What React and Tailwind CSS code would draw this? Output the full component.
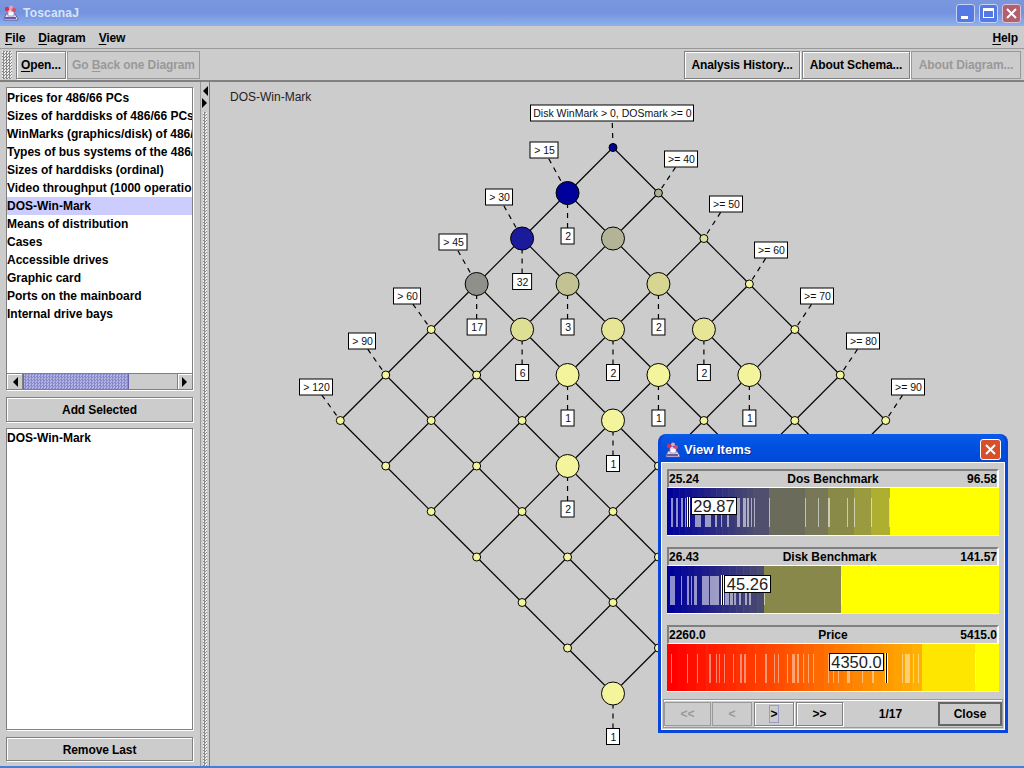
const sans = { fontFamily: '"Liberation Sans", Arial, sans-serif' };

const diagrams = [
  'Prices for 486/66 PCs',
  'Sizes of harddisks of 486/66 PCs',
  'WinMarks (graphics/disk) of 486/66 PCs',
  'Types of bus systems of the 486/66 PCs',
  'Sizes of harddisks (ordinal)',
  'Video throughput (1000 operations/s)',
  'DOS-Win-Mark',
  'Means of distribution',
  'Cases',
  'Accessible drives',
  'Graphic card',
  'Ports on the mainboard',
  'Internal drive bays',
];

// node key is "left steps,right steps" in the lattice
const bigNodes = {
  '1,0': '#00009a', '2,0': '#1a1a9a', '1,1': '#b3b398', '3,0': '#90908a',
  '2,1': '#c2c292', '1,2': '#d6d692', '3,1': '#dede94', '2,2': '#e6e696',
  '1,3': '#e6e696', '3,2': '#f4f49c', '2,3': '#f4f49c', '1,4': '#f4f49c',
  '3,3': '#f4f49c', '4,3': '#f4f49c', '6,6': '#f4f49c',
};
const smallColors = { '0,0': '#00009a', '0,1': '#b0b098', '0,2': '#e0e09c' };

const nodeX = (i, j) => 613 + (j - i) * 45.45;
const nodeY = (i, j) => 147.5 + (i + j) * 45.5;

const topLabels = [
  { t: 'Disk WinMark > 0, DOSmark >= 0', x: 612, y: 113, w: 164, n: [0, 0] },
  { t: '> 15', x: 544, y: 150, w: 29, n: [1, 0] },
  { t: '>= 40', x: 681, y: 159, w: 34, n: [0, 1] },
  { t: '> 30', x: 499, y: 197, w: 28, n: [2, 0] },
  { t: '>= 50', x: 726, y: 204, w: 34, n: [0, 2] },
  { t: '> 45', x: 453, y: 242, w: 29, n: [3, 0] },
  { t: '>= 60', x: 771, y: 250, w: 34, n: [0, 3] },
  { t: '> 60', x: 407, y: 296, w: 28, n: [4, 0] },
  { t: '>= 70', x: 817, y: 296, w: 34, n: [0, 4] },
  { t: '> 90', x: 362, y: 341, w: 28, n: [5, 0] },
  { t: '>= 80', x: 863, y: 341, w: 34, n: [0, 5] },
  { t: '> 120', x: 316, y: 387, w: 34, n: [6, 0] },
  { t: '>= 90', x: 908, y: 387, w: 34, n: [0, 6] },
];

const counts = [
  ['2', 1, 0], ['32', 2, 0], ['17', 3, 0], ['3', 2, 1], ['2', 1, 2], ['6', 3, 1], ['2', 2, 2],
  ['2', 1, 3], ['1', 3, 2], ['1', 2, 3], ['1', 1, 4], ['1', 3, 3], ['2', 4, 3], ['1', 6, 6],
];

const steps = [0, 1, 2, 3, 4, 5, 6];

function Tag({ t, x, y, w }) {
  return (
    <g>
      <rect x={x - w / 2 + 0.5} y={y - 8} width={w - 1} height={16} fill="#fff" stroke="#000" />
      <text x={x + 0.5} y={y + 4} textAnchor="middle" fontSize="10.5" fill="#111">{t}</text>
    </g>
  );
}

function Lattice() {
  return (
    <svg width="814" height="684" viewBox="210 82 814 684" className="block" style={sans}>
      {steps.map((i) =>
        steps.map((j) => (
          <g key={`${i}-${j}`} stroke="#000" strokeWidth="1.1">
            {i < 6 && <line x1={nodeX(i, j)} y1={nodeY(i, j)} x2={nodeX(i + 1, j)} y2={nodeY(i + 1, j)} />}
            {j < 6 && <line x1={nodeX(i, j)} y1={nodeY(i, j)} x2={nodeX(i, j + 1)} y2={nodeY(i, j + 1)} />}
          </g>
        ))
      )}
      {topLabels.map((l) => (
        <line key={l.t} x1={l.x} y1={l.y} x2={nodeX(...l.n)} y2={nodeY(...l.n)} stroke="#000" strokeWidth="1.2" strokeDasharray="5 5" />
      ))}
      {counts.map(([c, i, j]) => (
        <line key={`${i}${j}`} x1={nodeX(i, j)} y1={nodeY(i, j)} x2={nodeX(i, j)} y2={nodeY(i, j) + 42} stroke="#000" strokeWidth="1.2" strokeDasharray="5 5" />
      ))}
      {steps.map((i) =>
        steps.map((j) => {
          const big = bigNodes[`${i},${j}`];
          return (
            <circle
              key={`${i}-${j}`}
              cx={nodeX(i, j)}
              cy={nodeY(i, j)}
              r={big ? 11.5 : 4}
              fill={big || smallColors[`${i},${j}`] || '#f4f49c'}
              stroke="#000"
            />
          );
        })
      )}
      {topLabels.map((l) => <Tag key={l.t} {...l} />)}
      {counts.map(([c, i, j]) => (
        <Tag key={`${i}${j}`} t={c} x={nodeX(i, j)} y={nodeY(i, j) + 43} w={c.length > 1 ? 20 : 14} />
      ))}
    </svg>
  );
}

function mix(a, b, t) {
  const c = a.map((v, k) => Math.round(v + (b[k] - v) * t));
  return `rgb(${c[0]},${c[1]},${c[2]})`;
}

// stripes are given as [start, width] in px from the bar's left edge
function Bar({ segments, stripes, marker, box, value, stripeColor }) {
  return (
    <svg width="332" height="47" className="block" style={sans}>
      {segments.map(([x, w, c]) => <rect key={x} x={x} y="0" width={w} height="47" fill={c} />)}
      {stripes.map(([x, w]) => (
        <rect key={x} x={x} y="10" width={w} height="29" fill={stripeColor} />
      ))}
      <rect x={marker - 1} y="9" width="3" height="30" fill="#fff" />
      <rect x={marker} y="9" width="1" height="30" fill="#000" />
      <rect x={box[0] + 0.5} y={box[1] + 0.5} width={box[2]} height="17" fill="#fff" stroke="#000" />
      <text x={box[0] + box[2] / 2 + 0.5} y={box[1] + 15} textAnchor="middle" fontSize="16.5" fill="#222">{value}</text>
    </svg>
  );
}

const ramp = (from, to, start, width, n) =>
  Array.from({ length: n }, (_, k) => [
    start + (k * width) / n,
    width / n + 0.5,
    mix(from, to, k / (n - 1)),
  ]);

const bars = [
  {
    lo: '25.24', name: 'Dos Benchmark', hi: '96.58',
    segments: [
      ...ramp([0, 0, 154], [74, 74, 112], 0, 86, 14),
      [86, 16, '#50506e'], [102, 36, '#6b6b5c'], [138, 23, '#787858'], [161, 26, '#8a8a48'],
      [187, 17, '#9a9a3e'], [204, 19, '#aeae30'], [223, 109, '#ffff00'],
    ],
    stripes: [[4, 2], [9, 2], [14, 2], [18, 1], [28, 6], [38, 6], [48, 2], [54, 1], [60, 2], [70, 3], [76, 3], [80, 2], [84, 1], [87, 1], [102, 1], [138, 1], [151, 1], [161, 2], [180, 1], [187, 1], [204, 1], [222, 1]],
    marker: 21, box: [24, 9, 45], value: '29.87', color: 'rgba(255,255,255,0.55)',
  },
  {
    lo: '26.43', name: 'Disk Benchmark', hi: '141.57',
    segments: [
      ...ramp([0, 0, 154], [74, 74, 112], 0, 97, 14),
      [97, 77, '#88884a'], [174, 158, '#ffff00'],
    ],
    stripes: [[3, 5], [14, 1], [20, 2], [24, 1], [27, 3], [35, 7], [43, 9], [58, 4], [63, 3], [67, 2], [72, 2], [78, 2], [82, 2], [97, 1], [174, 1]],
    marker: 55, box: [57, 9, 46], value: '45.26', color: 'rgba(255,255,255,0.55)',
  },
  {
    lo: '2260.0', name: 'Price', hi: '5415.0',
    segments: [
      ...ramp([255, 0, 0], [255, 176, 0], 0, 255, 26),
      [255, 53, '#ffe600'], [308, 24, '#ffff00'],
    ],
    stripes: [[4, 1], [20, 1], [30, 1], [42, 2], [49, 1], [52, 1], [57, 1], [66, 1], [73, 2], [77, 2], [88, 1], [98, 2], [107, 1], [111, 1], [120, 1], [125, 3], [130, 2], [136, 1], [141, 1], [146, 1], [161, 1], [166, 1], [171, 1], [180, 3], [195, 1], [205, 2], [235, 1], [238, 5], [246, 1], [251, 1], [308, 1]],
    marker: 219, box: [162, 9, 54], value: '4350.0', color: 'rgba(255,255,255,0.45)',
  },
];

function Btn({ className = '', disabled, children }) {
  return (
    <div
      className={`flex items-center justify-center pt-px border font-bold text-[12px] tracking-[-0.1px] ${
        disabled
          ? 'border-[#999999] text-[#999999]'
          : 'border-[#808080] text-black shadow-[inset_1px_1px_0_#fff,1px_1px_0_#fff]'
      } ${className}`}
    >
      {children}
    </div>
  );
}

function U({ children }) {
  return <span className="underline underline-offset-2">{children}</span>;
}

function Logo() {
  return (
    <svg width="16" height="16" viewBox="0 0 16 16" className="shrink-0">
      <path d="M1 14L3 9H12L15 14V15H1Z" fill="#e8e4f4" stroke="#5a4a90" strokeWidth="0.8" />
      <rect x="5" y="6" width="6" height="5" fill="#fff" stroke="#9a7ab0" strokeWidth="0.8" />
      <circle cx="4" cy="4" r="2.2" fill="#d83050" />
      <circle cx="8" cy="2.5" r="2" fill="#f0a0b0" />
      <circle cx="11" cy="5" r="2" fill="#e04868" />
      <circle cx="7" cy="6" r="1.5" fill="#f8d0d8" />
      <rect x="2" y="12" width="11" height="2" fill="#6a5aa8" />
    </svg>
  );
}

function Arrow({ dir }) {
  return (
    <svg width="6" height="10" viewBox="0 0 6 10">
      <path d={dir === 'left' ? 'M6 0V10L1 5Z' : 'M0 0V10L5 5Z'} fill="#000" />
    </svg>
  );
}

function ViewItems() {
  return (
    <div className="absolute left-[658px] top-[434px] w-[350px] h-[299px] flex flex-col rounded-t-lg bg-[#0a46d8] px-[3px] pb-[3px] text-black">
      <div className="h-[28px] shrink-0 flex items-center pl-[4px] pr-[4px] pt-[3px] rounded-t-lg bg-gradient-to-b from-[#0a5ae8] via-[#0050e0] to-[#0048d8]">
        <Logo />
        <span className="ml-[3px] text-[13px] font-bold text-white [text-shadow:1px_1px_0_#0a2a90]">View Items</span>
        <div className="ml-auto w-[21px] h-[21px] rounded-[3px] border border-white bg-[#d8502a] flex items-center justify-center">
          <svg width="13" height="13" viewBox="0 0 13 13">
            <path d="M2 2L11 11M11 2L2 11" stroke="#fff" strokeWidth="2" />
          </svg>
        </div>
      </div>
      <div className="flex-1 bg-[#cccccc] border border-white flex flex-col px-[5px] pt-[6px]">
        {bars.map((b) => (
          <div key={b.name} className="mb-[11px]">
            <div className="h-[19px] flex items-center justify-between border-t-2 border-l-2 border-[#808080] border-b border-b-white border-r-2 border-r-white text-[12px] font-bold">
              <span>{b.lo}</span>
              <span>{b.name}</span>
              <span>{b.hi}</span>
            </div>
            <div className="border-b border-white">
              <Bar segments={b.segments} stripes={b.stripes} marker={b.marker} box={b.box} value={b.value} stripeColor={b.color} />
            </div>
          </div>
        ))}
        <div className="-mx-[4px] -mt-[4px] h-[29px] border border-[#999999] shadow-[inset_1px_1px_0_#fff] flex items-center gap-[1px] text-[12px] font-bold">
          <Btn disabled className="w-[47px] h-[24px]">&lt;&lt;</Btn>
          <Btn disabled className="w-[40px] h-[24px]">&lt;</Btn>
          <Btn className="w-[40px] h-[24px] ml-[1px]">
            <span className="border border-[#9999cc] h-[18px] w-[10px] flex items-center justify-center">&gt;</span>
          </Btn>
          <Btn className="w-[47px] h-[24px] ml-[1px]">&gt;&gt;</Btn>
          <span className="w-[93px] text-center pt-px">1/17</span>
          <div className="w-[64px] h-[24px] flex items-center justify-center border-2 border-[#666666] pt-px">Close</div>
        </div>
      </div>
    </div>
  );
}

export default function App() {
  return (
    <div className="relative w-[1024px] h-[768px] overflow-hidden flex flex-col bg-[#cccccc] text-black" style={sans}>
      {/* Title bar */}
      <div className="h-[26px] shrink-0 flex items-center pl-[3px] pr-[3px] bg-gradient-to-b from-[#7a97de] via-[#7593de] to-[#8fb1ec]">
        <Logo />
        <span className="ml-[4px] text-[12px] font-bold text-[#d8e4f8] tracking-[0.2px]">ToscanaJ</span>
        <div className="ml-auto flex gap-[4px]">
          <div className="w-[19px] h-[19px] rounded-[3px] border border-[#c8d4f4] bg-[#5478e4] flex items-end pb-[3px] pl-[4px]">
            <div className="w-[7px] h-[3px] bg-white" />
          </div>
          <div className="w-[19px] h-[19px] rounded-[3px] border border-[#c8d4f4] bg-[#5478e4] flex items-center justify-center">
            <div className="w-[11px] h-[10px] border border-white border-t-[3px]" />
          </div>
          <div className="w-[19px] h-[19px] rounded-[3px] border border-[#d8c4d4] bg-[#b0606e] flex items-center justify-center">
            <svg width="13" height="13" viewBox="0 0 13 13">
              <path d="M2 2L11 11M11 2L2 11" stroke="#fff" strokeWidth="2" />
            </svg>
          </div>
        </div>
      </div>

      {/* Menu bar */}
      <div className="h-[23px] shrink-0 flex items-center pt-[2px] px-[5px] gap-[13px] text-[12px] font-bold tracking-[-0.1px] border-b border-[#999999]">
        <span><U>F</U>ile</span>
        <span><U>D</U>iagram</span>
        <span><U>V</U>iew</span>
        <span className="ml-auto pr-[1px]"><U>H</U>elp</span>
      </div>

      {/* Toolbar */}
      <div className="h-[33px] shrink-0 flex items-center pl-[2px] pr-[3px] gap-[1px] border-b-2 border-[#808080]">
        <div className="w-[10px] h-[28px] mr-[3px] bg-[repeating-conic-gradient(#888888_0_25%,#eeeeee_0_50%)] bg-[length:3px_3px]" />
        <Btn className="w-[50px] h-[28px]"><span><U>O</U>pen...</span></Btn>
        <Btn disabled className="w-[133px] h-[28px]"><span>Go <U>B</U>ack one Diagram</span></Btn>
        <Btn className="w-[116px] h-[28px] ml-auto">Analysis History...</Btn>
        <Btn className="w-[108px] h-[28px] ml-[1px]">About Schema...</Btn>
        <Btn disabled className="w-[110px] h-[28px]">About Diagram...</Btn>
      </div>

      {/* Main split */}
      <div className="flex-1 min-h-0 flex border-b-2 border-[#3f7fdf]">
        <div className="w-[201px] shrink-0 flex flex-col pl-[6px] pr-[7px] pt-[5px] pb-[5px] border-l border-[#999999] -ml-px">
          <div className="h-[303px] shrink-0 flex flex-col bg-white border border-[#808080] shadow-[1px_1px_0_#fff]">
            <div className="flex-1 min-h-0 overflow-hidden pt-px">
              {diagrams.map((d) => (
                <div
                  key={d}
                  className={`h-[18px] leading-[18px] text-[12px] font-bold whitespace-nowrap ${d === 'DOS-Win-Mark' ? 'bg-[#ccccff]' : ''}`}
                >
                  {d}
                </div>
              ))}
            </div>
            <div className="h-[16px] shrink-0 flex bg-[#cccccc] border-t border-[#808080]">
              <div className="w-[16px] flex items-center justify-center border-r border-[#808080] shadow-[inset_1px_1px_0_#fff]"><Arrow dir="left" /></div>
              <div className="w-[106px] border-x border-[#6666aa] bg-[repeating-conic-gradient(#8888cc_0_25%,#b4b4e0_0_50%)] bg-[length:3px_3px]" />
              <div className="ml-auto w-[15px] flex items-center justify-center border-l border-[#808080] shadow-[inset_1px_1px_0_#fff]"><Arrow dir="right" /></div>
            </div>
          </div>
          <Btn className="h-[25px] shrink-0 mt-[7px]">Add Selected</Btn>
          <div className="flex-1 min-h-0 mt-[6px] bg-white border border-[#808080] shadow-[1px_1px_0_#fff] text-[12px] font-bold leading-[18px]">DOS-Win-Mark</div>
          <Btn className="h-[24px] shrink-0 mt-[7px]">Remove Last</Btn>
        </div>

        {/* Split divider */}
        <div className="w-[9px] shrink-0 flex flex-col items-center border-l border-[#999999] pt-[4px] gap-[2px]">
          <Arrow dir="left" />
          <Arrow dir="right" />
          <div className="flex-1 w-[4px] mt-[2px] bg-[repeating-conic-gradient(#888888_0_25%,#eeeeee_0_50%)] bg-[length:3px_3px]" />
        </div>

        {/* Canvas */}
        <div className="relative flex-1 min-w-0 border-l border-[#808080]">
          <span className="absolute left-[20px] top-[7px] text-[12px] leading-[16px] text-[#222222] z-10">DOS-Win-Mark</span>
          <Lattice />
        </div>
      </div>

      <ViewItems />
    </div>
  );
}
